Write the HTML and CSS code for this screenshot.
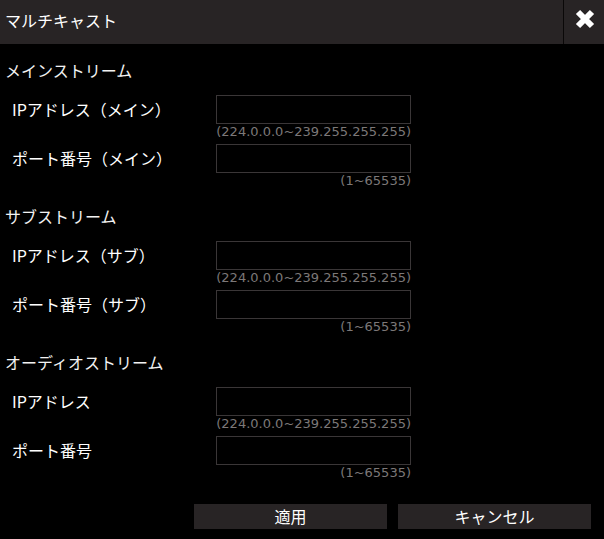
FILE: index.html
```html
<!DOCTYPE html>
<html lang="ja">
<head>
<meta charset="utf-8">
<link rel="stylesheet" href="styles.css">
</head>
<body>
<div class="dialog">
  <div class="header">
    <div class="title">マルチキャスト</div>
    <div class="close">
      <svg width="20" height="20" viewBox="0 0 20 20"><path d="M3 3 L17 17 M17 3 L3 17" stroke="#fff" stroke-width="6" stroke-linecap="butt"/></svg>
    </div>
  </div>
  <div class="content">
    <div class="section">
      <div class="section-title">メインストリーム</div>
      <div class="row"><div class="label">IPアドレス（メイン）</div><div class="input"></div></div>
      <div class="hint">(224.0.0.0~239.255.255.255)</div>
      <div class="row"><div class="label">ポート番号（メイン）</div><div class="input"></div></div>
      <div class="hint">(1~65535)</div>
    </div>
    <div class="section">
      <div class="section-title">サブストリーム</div>
      <div class="row"><div class="label">IPアドレス（サブ）</div><div class="input"></div></div>
      <div class="hint">(224.0.0.0~239.255.255.255)</div>
      <div class="row"><div class="label">ポート番号（サブ）</div><div class="input"></div></div>
      <div class="hint">(1~65535)</div>
    </div>
    <div class="section">
      <div class="section-title">オーディオストリーム</div>
      <div class="row"><div class="label">IPアドレス</div><div class="input"></div></div>
      <div class="hint">(224.0.0.0~239.255.255.255)</div>
      <div class="row"><div class="label">ポート番号</div><div class="input"></div></div>
      <div class="hint">(1~65535)</div>
    </div>
    <div class="buttons">
      <div class="btn">適用</div>
      <div class="btn">キャンセル</div>
    </div>
  </div>
</div>
</body>
</html>
```
FILE: styles.css
```css
html, body {
  margin: 0;
  padding: 0;
  background: #000;
}
body {
  font-family: "Noto Sans CJK JP", "Noto Sans", sans-serif;
  color: #fff;
}
.dialog {
  width: 604px;
  height: 539px;
  background: #000;
  overflow: hidden;
}
.header {
  display: flex;
  height: 44px;
  background: #282425;
}
.title {
  flex: 1;
  padding-left: 5px;
  font-size: 16px;
  line-height: 40px;
}
.close {
  width: 41px;
  border-left: 1px solid #0a0808;
  display: flex;
  align-items: center;
  justify-content: center;
  padding-bottom: 7px;
  padding-left: 1px;
  box-sizing: border-box;
}
.content {
  padding-top: 14px;
}
.section {
  padding-bottom: 11px;
}
.section-title {
  padding-left: 5px;
  font-size: 16px;
  line-height: 24px;
  height: 24px;
  margin-bottom: 13px;
  color: #f2f2f2;
}
.row {
  display: flex;
  align-items: center;
  padding-left: 12px;
}
.label {
  width: 204px;
  font-size: 16px;
  line-height: 29px;
}
.input {
  width: 195px;
  height: 29px;
  box-sizing: border-box;
  border: 1px solid #3a3637;
}
.hint {
  margin-left: 216px;
  width: 195px;
  text-align: right;
  height: 16px;
  line-height: 16px;
  margin-bottom: 4px;
  font-family: "DejaVu Sans", sans-serif;
  font-size: 13px;
  color: #7c7878;
  white-space: nowrap;
}
.buttons {
  display: flex;
  justify-content: flex-end;
  gap: 11px;
  padding-right: 13px;
  margin-top: 8px;
}
.btn {
  width: 193px;
  height: 25px;
  background: #282425;
  text-align: center;
  font-size: 16px;
  line-height: 25px;
  color: #fff;
}
```
